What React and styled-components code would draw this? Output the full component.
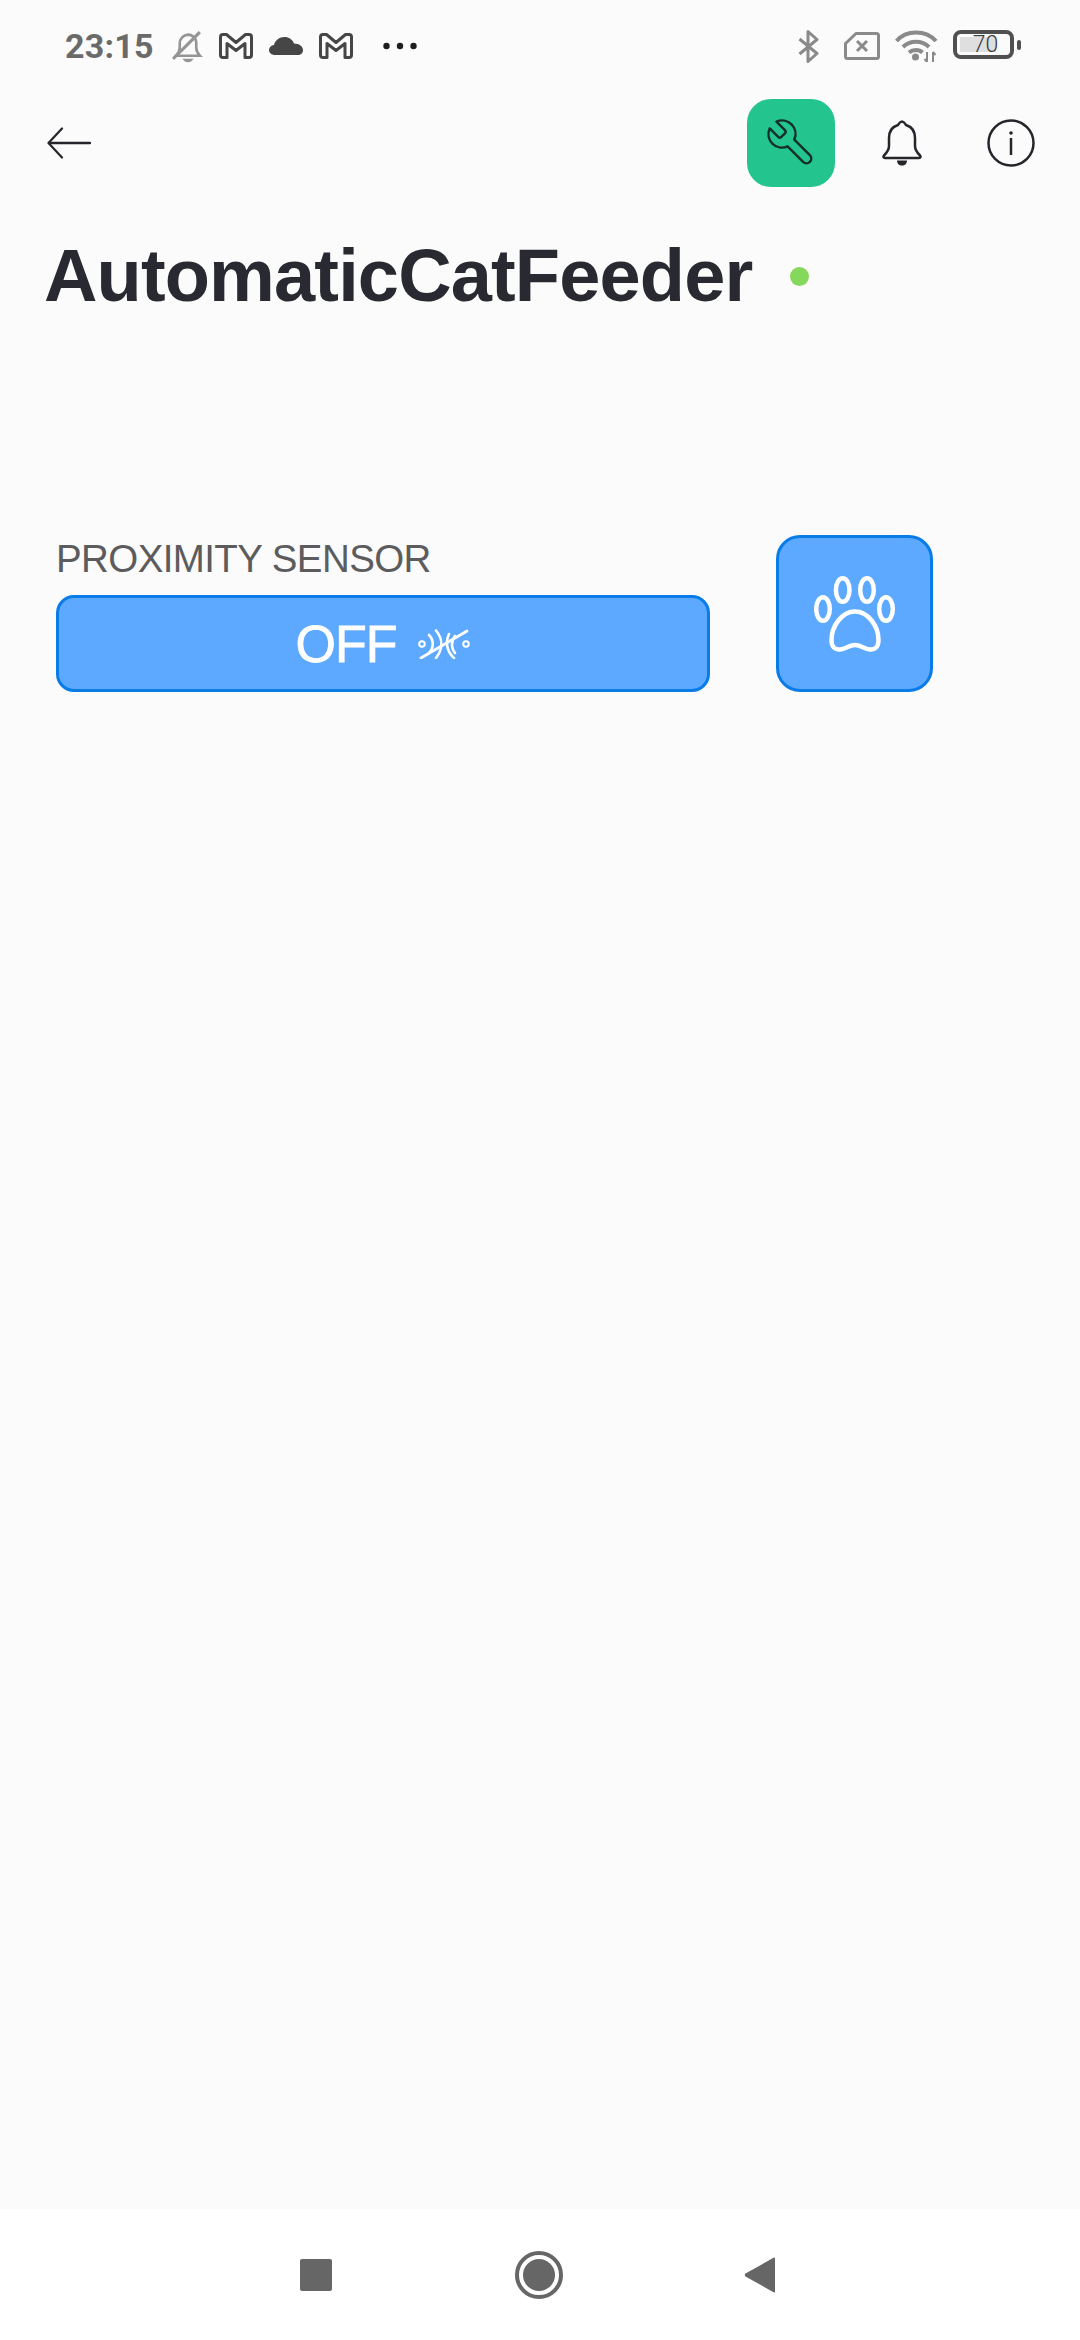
import styled, { createGlobalStyle } from 'styled-components';

const GlobalStyle = createGlobalStyle`
  html, body {
    margin: 0;
    padding: 0;
    background: #fbfbfb;
  }
  * {
    box-sizing: border-box;
  }
`;

const Screen = styled.div`
  width: 1080px;
  height: 2340px;
  display: flex;
  flex-direction: column;
  background: #fbfbfb;
  font-family: 'Liberation Sans', Arial, sans-serif;
  overflow: hidden;
`;

const StatusBar = styled.div`
  height: 92px;
  padding: 0 66px 0 65px;
  display: flex;
  align-items: center;
  justify-content: space-between;
`;

const StatusGroup = styled.div`
  display: flex;
  align-items: center;
`;

const Time = styled.span`
  width: 90px;
  font-family: Roboto, sans-serif;
  font-size: 34px;
  font-weight: 700;
  letter-spacing: 0.2px;
  color: #6a6a6a;
  white-space: nowrap;
`;

const StatusIcon = styled.svg`
  display: block;
  flex: none;
  margin-left: ${(props) => props.$left || 0}px;
  margin-top: ${(props) => props.$top || 0}px;
`;

const Battery = styled.div`
  position: relative;
  width: 61px;
  height: 29px;
  margin-left: 15px;
  margin-top: -3px;
  border: 4px solid #505050;
  border-radius: 8px;
  display: flex;
  align-items: center;
  justify-content: center;
  font-family: Roboto, sans-serif;
  font-size: 23px;
  font-weight: 300;
  color: #3a3a3a;
  padding-left: 4px;

  &::before {
    content: '';
    position: absolute;
    left: 3px;
    top: 3px;
    bottom: 3px;
    width: 36px;
    background: #dfdfdf;
  }
  &::after {
    content: '';
    position: absolute;
    right: -11px;
    top: 6px;
    width: 4px;
    height: 10px;
    border-radius: 2px;
    background: #505050;
  }
  span {
    position: relative;
  }
`;

const Toolbar = styled.div`
  height: 88px;
  margin-top: 7px;
  padding: 0 45px 0 47px;
  display: flex;
  align-items: center;
`;

const ToolIcon = styled.svg`
  display: block;
  flex: none;
  margin-left: ${(props) => props.$left || 0}px;
`;

const WrenchTile = styled.div`
  width: 88px;
  height: 88px;
  margin-left: auto;
  border-radius: 24px;
  background: #23c48e;
  display: flex;
  align-items: center;
  justify-content: center;
`;

const TitleRow = styled.div`
  margin-top: 43px;
  padding-left: 44px;
  display: flex;
  align-items: center;
`;

const Title = styled.h1`
  margin: 0;
  font-size: 74px;
  line-height: 92px;
  font-weight: 700;
  letter-spacing: -0.85px;
  color: #292a31;
`;

const OnlineDot = styled.div`
  width: 19px;
  height: 19px;
  margin-left: 38px;
  border-radius: 50%;
  background: #84d95c;
`;

const Main = styled.main`
  flex: 1;
  padding: 213px 0 0 56px;
  display: flex;
  align-items: flex-end;
  align-content: flex-start;
  flex-wrap: wrap;
  gap: 0 66px;
`;

const Field = styled.div`
  width: 654px;
`;

const Label = styled.div`
  font-size: 38.5px;
  line-height: 48px;
  letter-spacing: -0.6px;
  color: #5c5c5e;
  margin-bottom: 12px;
`;

const Widget = styled.button`
  height: 97px;
  width: ${(props) => (props.$square ? '157px' : '100%')};
  padding: 0;
  border: 3px solid #0a7ce8;
  border-radius: 18px;
  background: #5ca9ff;
  color: #fff;
  display: flex;
  align-items: center;
  justify-content: center;
  gap: 22px;
  font-family: inherit;
  font-size: 52px;
  letter-spacing: -1px;
  -webkit-text-stroke: 0.8px #fff;
`;

const PawWidget = styled(Widget)`
  height: 157px;
  border-radius: 24px;
`;

const NavBar = styled.nav`
  height: 131px;
  background: #fff;
  padding: 48px 304px 0 300px;
  display: flex;
  align-items: flex-start;
  justify-content: space-between;
`;

const NavSquare = styled.div`
  width: 32px;
  height: 32px;
  margin-top: 2px;
  border-radius: 2px;
  background: #666;
`;

const NavHome = styled.div`
  width: 48px;
  height: 48px;
  margin-top: -6px;
  margin-left: 2px;
  border: 4px solid #666;
  border-radius: 50%;
  padding: 4px;
  &::before {
    content: '';
    display: block;
    width: 32px;
    height: 32px;
    border-radius: 50%;
    background: #666;
  }
`;

const MailGlyph = ({ left }) => (
  <StatusIcon $left={left} $top={-1} width="34" height="26" viewBox="0 0 34 26" fill="none" stroke="#464646" strokeWidth="3" strokeLinejoin="round">
    <path d="M1.5 4Q1.5 1.5 4 1.5H7.5L17 9.5L26.5 1.500H30Q32.500 1.500 32.500 4V22Q32.500 24.500 30 24.500H26V10.500L17 17.500L8 10.500V24.500H4Q1.500 24.500 1.500 22Z" />
  </StatusIcon>
);

const App = () => (
  <Screen>
    <GlobalStyle />
    <StatusBar>
      <StatusGroup>
        <Time>23:15</Time>
        <StatusIcon $left={17} $top={2} width="32" height="32" viewBox="0 0 31 31" fill="none" stroke="#959595" strokeWidth="2.500">
          <path d="M4 24c2-2 3.500-4 3.500-8v-4c0-4.500 3.500-8 8-8.500 4 0 7.500 3 8 7.500v5c0 4 1.500 6 3.500 8z" />
          <path d="M1 27L27 1" strokeWidth="3" />
          <path d="M10 27h11l-2.500 2.500c-1.500 1-4.500 1-6 0z" fill="#959595" stroke="none" />
        </StatusIcon>
        <MailGlyph left={15} />
        <StatusIcon $left={16} $top={-1} width="34" height="18" viewBox="0 0 34 18" fill="#464646">
          <path d="M6 18C2.500 18 0 15.800 0 13c0-2.600 2-4.600 5-5C6 3.500 10.500 0 15.500 0c4.500 0 8 2.500 9.500 6.500 5 0 9 2.800 9 6.700 0 2.800-2.200 4.800-5 4.800z" />
        </StatusIcon>
        <MailGlyph left={16} />
        <StatusIcon $left={30} width="34" height="8" viewBox="0 0 34 8" fill="#1e1e1e">
          <circle cx="3.500" cy="4" r="3.200" />
          <circle cx="17" cy="4" r="3.200" />
          <circle cx="30.500" cy="4" r="3.200" />
        </StatusIcon>
      </StatusGroup>
      <StatusGroup>
        <StatusIcon width="21" height="33" viewBox="0 0 21 33" fill="none" stroke="#8a8a8a" strokeWidth="3" strokeLinejoin="round">
          <path d="M1.500 9L19 23.500L10 31.500V1.500L19 9.500L1.500 24" />
        </StatusIcon>
        <StatusIcon $left={25} width="36" height="28" viewBox="0 0 36 28" fill="none" stroke="#8a8a8a" strokeWidth="3" strokeLinejoin="round">
          <path d="M12 1.500H32.500Q34.500 1.500 34.500 3.500V24.500Q34.500 26.500 32.500 26.500H3.500Q1.500 26.500 1.500 24.500V11.500z" />
          <path d="M13 9L23 19M23 9L13 19" />
        </StatusIcon>
        <StatusIcon $left={15} width="43" height="32" viewBox="0 0 43 32" fill="none" stroke="#8a8a8a" strokeWidth="4">
          <path d="M1.500 11C11 -0.500 31 -0.500 41 11" />
          <path d="M8 17C15 10 27 10 34 17" />
          <path d="M14 22.500C18 19 24 19 27.500 22.500" />
          <circle cx="20.500" cy="27" r="3.500" fill="#8a8a8a" stroke="none" />
          <path d="M32 22V32M29.500 29L32 32M38 32V22M38 22L40.500 25" strokeWidth="2" />
        </StatusIcon>
        <Battery>
          <span>70</span>
        </Battery>
      </StatusGroup>
    </StatusBar>

    <Toolbar>
      <ToolIcon width="44" height="32" viewBox="0 0 44 32" fill="none" stroke="#25262b" strokeWidth="2.500" strokeLinecap="round" strokeLinejoin="round">
        <path d="M43 16H2" />
        <path d="M15 1.500L1.500 16L15 30.500" strokeWidth="2.200" />
      </ToolIcon>
      <WrenchTile>
        <svg width="54" height="54" viewBox="0 0 24 24" fill="none" stroke="#15302a" strokeWidth="1.100" strokeLinecap="round" strokeLinejoin="round" style={{ transform: 'scaleX(-1)' }}>
          <path d="M14.700 6.300a1 1 0 0 0 0 1.400l1.600 1.600a1 1 0 0 0 1.400 0l3.770-3.770a6 6 0 0 1-7.940 7.940l-6.910 6.910a2.120 2.120 0 0 1-3-3l6.910-6.910a6 6 0 0 1 7.940-7.940l-3.760 3.760z" />
        </svg>
      </WrenchTile>
      <ToolIcon $left={47} width="40" height="46" viewBox="0 0 40 46" fill="none" stroke="#25262b" strokeWidth="2.500" strokeLinejoin="round">
        <path d="M20 1.500c-2 0-3 2-4 3.500C9.500 7 7 12 7 18v8c0 4-2.500 7-5 9.500-1 1.500-.5 2.500 1 2.500h34c1.500 0 2-1 1-2.500-2.500-2.500-5-5.500-5-9.500v-8c0-6-2.500-11-9-13-1-1.500-2-3.500-4-3.500z" />
        <path d="M15 40.500h10c0 3-2 5-5 5s-5-2-5-5z" fill="#25262b" stroke="none" />
      </ToolIcon>
      <ToolIcon $left={65} width="48" height="48" viewBox="0 0 48 48" fill="none" stroke="#25262b" strokeWidth="2.500">
        <circle cx="24" cy="24" r="22.500" />
        <path d="M24 19V36" />
        <circle cx="24" cy="14" r="1.800" fill="#25262b" stroke="none" />
      </ToolIcon>
    </Toolbar>

    <TitleRow>
      <Title>AutomaticCatFeeder</Title>
      <OnlineDot />
    </TitleRow>

    <Main>
      <Field>
        <Label>PROXIMITY SENSOR</Label>
        <Widget>
          OFF
          <svg width="52" height="30" viewBox="0 0 52 30" fill="none" stroke="#fff" strokeWidth="2.600" strokeLinecap="round">
            <circle cx="4" cy="15" r="2.800" strokeWidth="2" />
            <circle cx="48" cy="15" r="2.800" strokeWidth="2" />
            <path d="M3 29L49 2" strokeWidth="2.800" />
            <path d="M11 6C16 11 16 19 11 24" />
            <path d="M18 1.500C25 10 25 20 18 29" />
            <path d="M31 5C27 13 29 23 36 29" />
            <path d="M37 7C33 12 33 19 37 24" />
          </svg>
        </Widget>
      </Field>
      <PawWidget $square>
        <svg width="82" height="76" viewBox="0 0 82 76" fill="none" stroke="#fff" strokeWidth="4.500">
          <ellipse cx="9" cy="33" rx="6.800" ry="11.800" />
          <ellipse cx="28.700" cy="14" rx="6.800" ry="11.800" />
          <ellipse cx="53" cy="14" rx="6.800" ry="11.800" />
          <ellipse cx="72" cy="33" rx="6.800" ry="11.800" />
          <path d="M41 35.500C28 35.500 17.500 50 17.500 64C17.500 71 21 74 26 73.500C32 73 35 69 41 69C47 69 50 73 56 73.500C61 74 64.500 71 64.500 64C64.500 50 54 35.500 41 35.500Z" />
        </svg>
      </PawWidget>
    </Main>

    <NavBar>
      <NavSquare />
      <NavHome />
      <svg width="32" height="36" viewBox="0 0 32 36" fill="#666">
        <path d="M31 1.500V34.500Q31 36 29.500 35.200L1.500 19.500Q0 18 1.500 16.500L29.500 .800Q31 0 31 1.500Z" />
      </svg>
    </NavBar>
  </Screen>
);

export default App;
